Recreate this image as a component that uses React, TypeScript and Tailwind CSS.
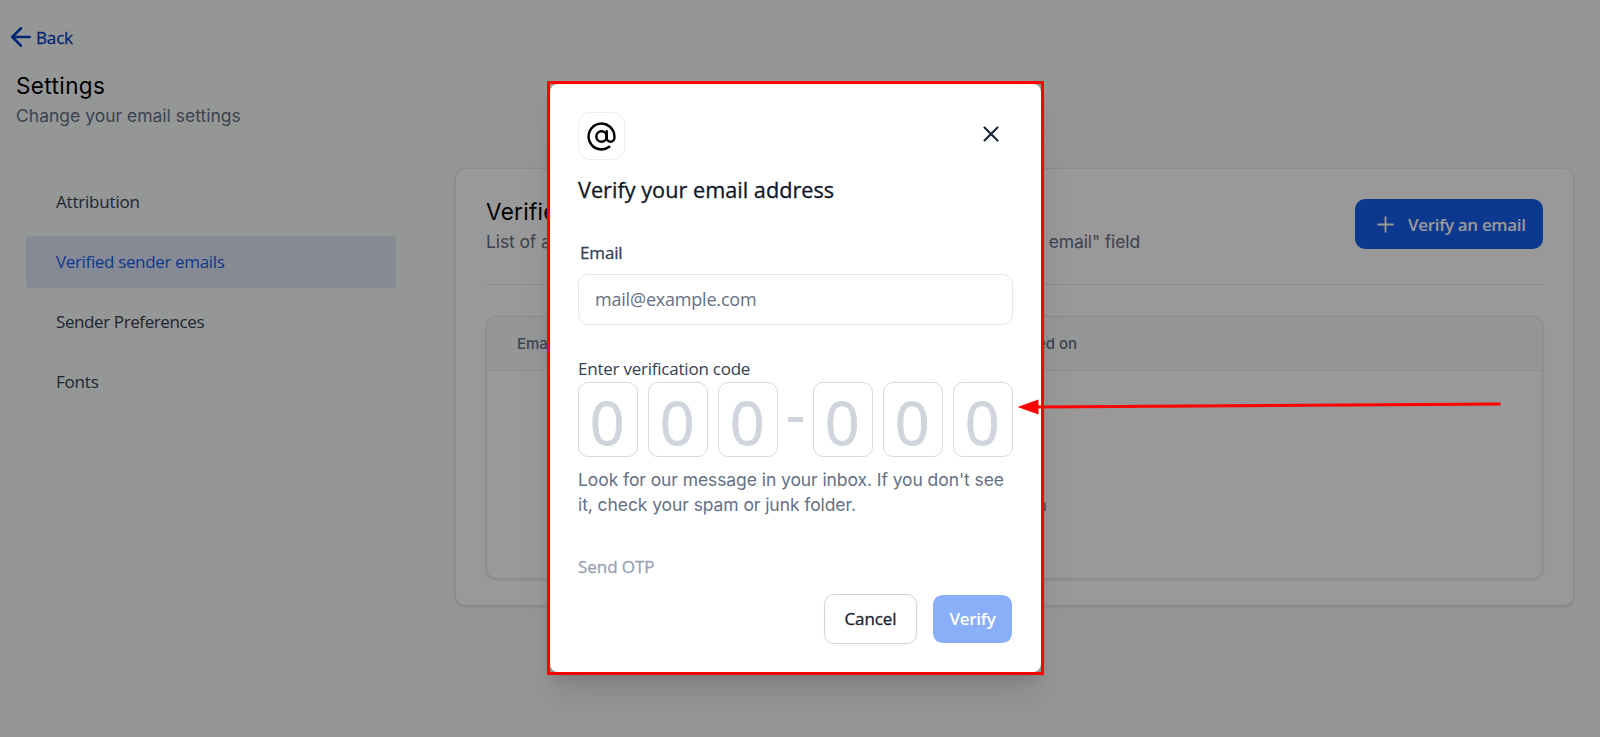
import React from 'react';
import { ArrowLeft, AtSign, Plus, X } from 'lucide-react';

const navItems = [
  { label: 'Attribution', active: false, tracking: 'tracking-[-0.2px]' },
  { label: 'Verified sender emails', active: true, tracking: 'tracking-[-0.35px]' },
  { label: 'Sender Preferences', active: false, tracking: 'tracking-[-0.4px]' },
  { label: 'Fonts', active: false, tracking: 'tracking-[-0.2px]' },
];

const CodeBox: React.FC = () => (
  <div className="flex h-[75px] w-[60px] items-center justify-center rounded-[10px] border border-[#d5d9e1] text-[60px] leading-none text-[#d0d5dd]">
    <span className="-ml-px mt-[5px] inline-block scale-x-[1.02] [-webkit-text-stroke:0.8px_#d0d5dd]">0</span>
  </div>
);

const SettingsPage: React.FC = () => (
  <div className="h-full">
    <a className="flex h-[74px] items-center gap-0 pl-[6px] text-[17px] font-medium tracking-[-0.15px] text-[#0040c1] [-webkit-text-stroke:0.3px]">
      <ArrowLeft size={30} strokeWidth={2} />
      <span className="mt-px">Back</span>
    </a>
    <header className="mt-px px-[16px] font-['Inter',sans-serif]">
      <h1 className="text-[22.5px] leading-[22px] tracking-[0.4px] text-black">Settings</h1>
      <p className="mt-[6px] text-[17.5px] leading-[25px] text-[#667085]">Change your email settings</p>
    </header>

    <div className="mt-[40px] flex items-start">
      <nav className="ml-[26px] mt-[8px] flex w-[370px] flex-col gap-2">
        {navItems.map((item) => (
          <a
            key={item.label}
            className={`flex h-[52px] items-center rounded px-[30px] text-[17px] ${item.tracking} ${
              item.active ? 'bg-[#dfe7f7] text-[#155eef]' : 'text-[#344054]'
            }`}
          >
            {item.label}
          </a>
        ))}
      </nav>

      <section className="ml-[59px] h-[438px] w-[1119px] rounded-[10px] border border-[#e4e7ec] bg-white px-[30px] pt-[30px] shadow-sm">
        <div className="flex h-[86px] justify-between border-b border-[#e4e7ec]">
          <div className="font-['Inter',sans-serif]">
            <h2 className="text-[22.5px] leading-[26px] tracking-[0.3px] text-black">Verified sender emails</h2>
            <p className="mt-[4px] flex w-[654px] justify-between whitespace-nowrap text-[17.5px] leading-[25px] tracking-[-0.12px] text-[#667085]">
              <span>List of all verified emails that can be used in the</span>
              <span>"Sender email" field</span>
            </p>
          </div>
          <button className="flex h-[50px] w-[188px] items-center gap-[10px] rounded-[10px] bg-[#155eef] pl-[18px] text-[17px] font-semibold tracking-[-0.33px] text-white">
            <Plus size={25} strokeWidth={1.8} />
            <span className="mt-[2px] whitespace-nowrap">Verify an email</span>
          </button>
        </div>

        <div className="mt-[31px] h-[263px] overflow-hidden rounded-[10px] border border-[#e4e7ec] shadow-sm">
          <div className="flex h-[54px] items-center border-b border-[#eaecf0] bg-[#f9fafb] px-[30px] pt-px font-['Inter',sans-serif] text-[15px] font-medium text-[#667085]">
            <span className="w-[482px]">Email</span>
            <span>Verified on</span>
          </div>
          <div className="flex h-[209px] w-[560px] items-center justify-end pt-[58px] text-[17px] text-[#667085]">
            Add a new one to begin
          </div>
        </div>
      </section>
    </div>
  </div>
);

const VerifyModal: React.FC = () => (
  <div className="absolute left-[547px] top-[81px] h-[594px] w-[497px] border-[3px] border-[#ff0000] shadow-[0_25px_31px_-6px_rgba(0,0,0,0.1),0_10px_12px_-6px_rgba(0,0,0,0.1)]">
    <div className="h-full w-full rounded-[8px] bg-white px-[28px] pt-[28px]">
      <div className="flex items-start justify-between">
        <div className="flex h-[48px] w-[47px] items-center justify-center rounded-[12px] border border-[#eaecf0] text-black">
          <AtSign size={31} strokeWidth={1.9} />
        </div>
        <X size={26} strokeWidth={2} className="mr-[9px] mt-[9px] text-[#1d2939]" />
      </div>
      <h3 className="mt-[15px] text-[21.7px] font-medium leading-[30px] text-[#101828] [-webkit-text-stroke:0.3px]">
        Verify your email address
      </h3>

      <label className="ml-[2px] mt-[35px] block text-[17px] font-medium leading-[25px] tracking-[-0.15px] text-[#344054] [-webkit-text-stroke:0.3px]">
        Email
      </label>
      <div className="mt-[9px] flex h-[51px] items-center rounded-[10px] border border-[#e4e7ec] px-4 pb-px text-[18px] tracking-[-0.2px] text-[#667085]">
        mail@example.com
      </div>

      <div className="mt-[31px] text-[17px] leading-[25px] tracking-[-0.23px] text-[#344054]">Enter verification code</div>
      <div className="mt-px flex items-center gap-[10px]">
        <CodeBox />
        <CodeBox />
        <CodeBox />
        <span className="h-[5px] w-[15px] bg-[#d0d5dd]" />
        <CodeBox />
        <CodeBox />
        <CodeBox />
      </div>
      <p className="mt-[10px] whitespace-nowrap font-['Inter',sans-serif] text-[17.5px] leading-[25px] tracking-[-0.08px] text-[#667085]">
        Look for our message in your inbox. If you don't see
        <br />
        it, check your spam or junk folder.
      </p>

      <button className="mt-[37px] block text-[17px] font-medium leading-[25px] tracking-[-0.05px] text-[#98a2b3] [-webkit-text-stroke:0.3px]">
        Send OTP
      </button>
      <div className="mt-[15px] flex justify-end gap-[15px] text-[17px]">
        <button className="h-[50px] w-[93px] rounded-[10px] border border-[#d0d5dd] font-medium tracking-[-0.1px] text-[#182230] shadow-xs [-webkit-text-stroke:0.3px]">
          Cancel
        </button>
        <button className="h-[50px] w-[81px] rounded-[10px] border border-white bg-[#8aaef7] bg-clip-padding font-semibold tracking-[-0.3px] text-white">
          Verify
        </button>
      </div>
    </div>
  </div>
);

const App: React.FC = () => {
  return (
    <div className="relative h-[737px] w-[1600px] overflow-hidden bg-[#f9fafb] font-['Open_Sans','Noto_Sans',sans-serif]">
      <SettingsPage />
      <div className="absolute inset-0 bg-black/40" />
      <VerifyModal />

      {/* Pointer to the code inputs */}
      <svg className="absolute left-[1017px] top-[398px]" width="488" height="18" viewBox="0 0 488 18" fill="none">
        <path d="M20 9L483.500 6" stroke="#ff0000" strokeWidth="3" />
        <path d="M0.500 9L21.500 1.500V16.500Z" fill="#ff0000" />
      </svg>
    </div>
  );
};

export default App;
